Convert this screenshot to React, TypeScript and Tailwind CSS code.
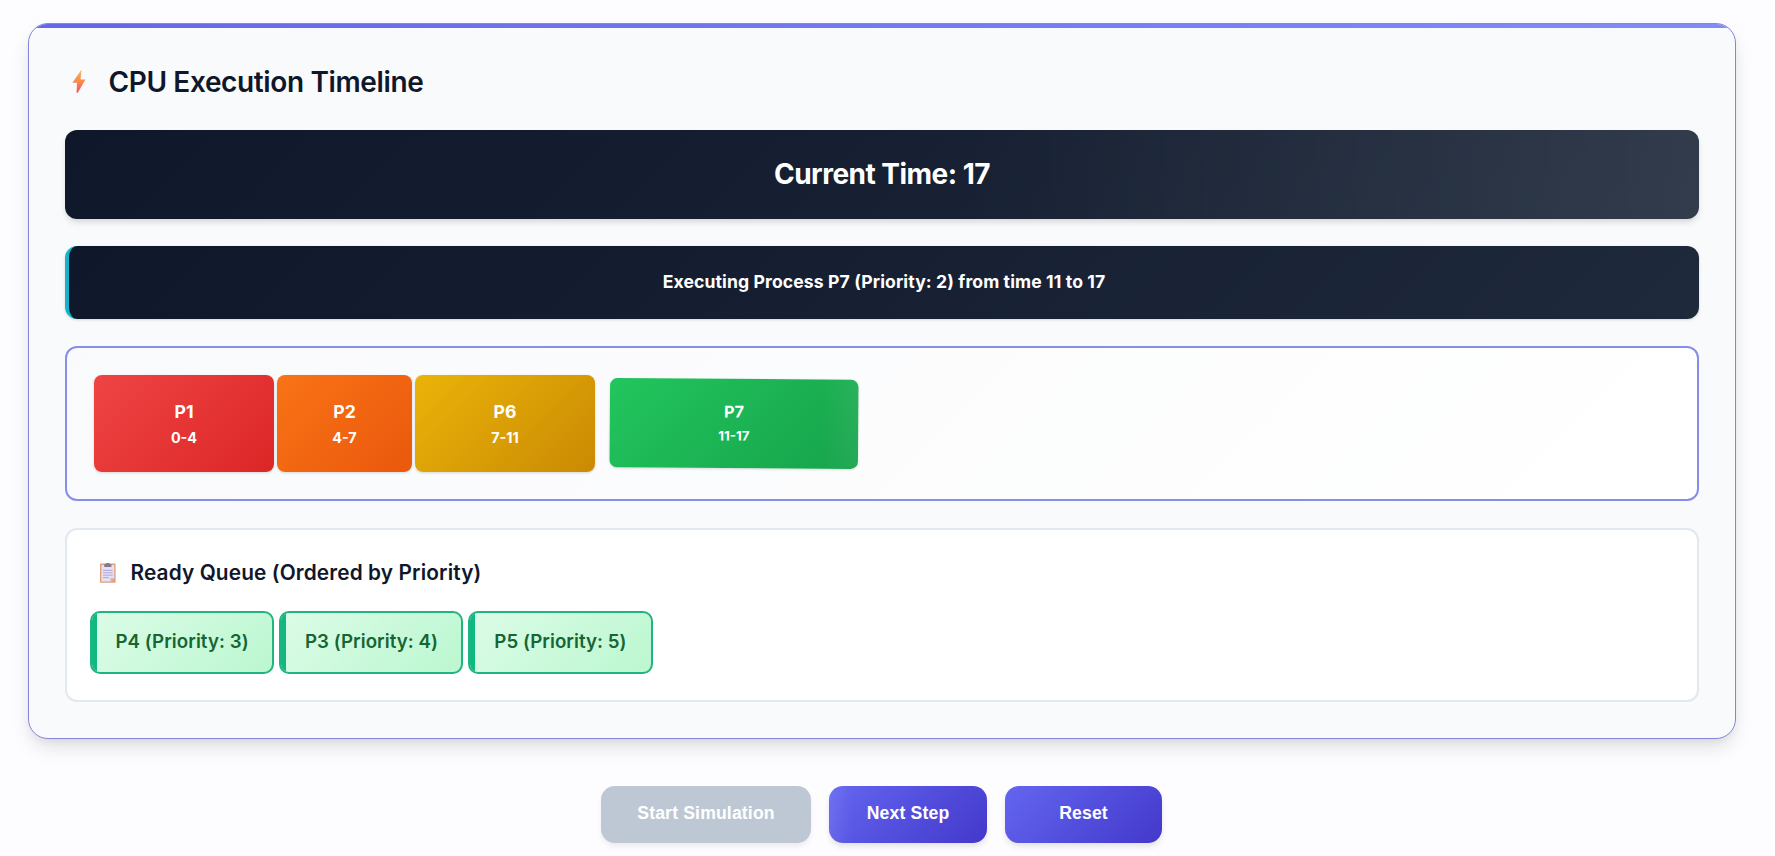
const blocks = [
  { id: "P1", span: "0-4", cls: "w-[180px] pt-[2px] from-[#ef4444] to-[#dc2626]" },
  { id: "P2", span: "4-7", cls: "w-[135px] pt-[2px] from-[#f97316] to-[#ea580c]" },
  { id: "P6", span: "7-11", cls: "w-[180px] pt-[2px] from-[#eab308] to-[#ca8a04]" },
  { id: "P7", span: "11-17", cls: "w-[270px] pb-[1px] translate-x-[1px] from-[#22c55e] to-[#16a34a] scale-[0.92] rotate-[0.4deg]", shine: true },
];

const queue = [
  { id: "P4", priority: 3 },
  { id: "P3", priority: 4 },
  { id: "P5", priority: 5 },
];

function Bolt() {
  return (
    <svg width="14" height="23" viewBox="0 0 14 23" className="mr-2 ml-[7px]">
      <defs>
        <linearGradient id="bolt" x1="0" y1="0" x2="0" y2="1">
          <stop offset="0" stopColor="#f3b65e" />
          <stop offset="0.5" stopColor="#fb8a4c" />
          <stop offset="1" stopColor="#ee4f60" />
        </linearGradient>
      </defs>
      <path d="M9 0.2 L0.4 12.8 H5 L4.6 22.8 H5.8 L13.4 9.4 H8.6 L9.4 0.2 Z" fill="url(#bolt)" />
    </svg>
  );
}

function Clipboard() {
  return (
    <svg width="16" height="20" viewBox="0 0 16 20">
      <rect x="0" y="0.4" width="15.6" height="19.4" rx="0.6" fill="#dfa27c" />
      <path d="M1.4 2H14.2V15L10.4 18.6H1.4Z" fill="#e6e0f3" />
      <path d="M14.2 15L10.4 18.6V15Z" fill="#c9b6dc" />
      <path d="M4.2 4V1.8Q4.2 1 5.4 1Q5.8 0 7.8 0T10.2 1Q11.4 1 11.4 1.8V4Z" fill="#85798f" />
      <path d="M3 7.4H12.6M3 9.8H12.6M3 12.2H12.6M3 14.6H9" stroke="#aba3cd" strokeWidth="0.9" />
    </svg>
  );
}

export default function App() {
  return (
    <div className="h-[856px] overflow-hidden bg-[#fdfcfe] pt-[22.5px] pl-[28px] font-['Inter',sans-serif] text-[#0f172a]">
      <section className="relative h-[716px] w-[1708px] rounded-[20px] border border-[#8585dc] bg-[#f9fafc] px-9 pt-[34px] shadow-[0_10px_20px_-3px_rgba(0,0,0,0.13),0_4px_8px_-2px_rgba(0,0,0,0.05)]">
        <div className="pointer-events-none absolute inset-0 overflow-hidden rounded-[19px]">
          <div className="h-1 bg-linear-to-r from-[#6666e8] to-[#818cf8]" />
        </div>
        <h2 className="flex h-12 items-center text-[28px] font-semibold tracking-[-0.37px]">
          <Bolt />
          <span className="ml-[14.5px]">CPU Execution Timeline</span>
        </h2>

        <div className="relative mt-6 flex h-[89px] items-center justify-center overflow-hidden rounded-xl bg-linear-[135deg] from-[#0f172a] to-[#1e293b] text-[28px] font-bold tracking-[-0.52px] text-white shadow-[0_4px_6px_-1px_rgba(0,0,0,0.15)]">
          <div className="absolute inset-y-0 right-0 w-[740px] bg-linear-to-r from-transparent to-white/9" />
          <span>Current Time: 17</span>
        </div>

        <div className="mt-[27.5px] flex h-[72.5px] items-center justify-center rounded-xl border-l-4 border-[#16b1cb] bg-linear-[135deg] from-[#0f172a] to-[#1e293b] text-[17.6px] font-bold tracking-[0.11px] text-white shadow-[0_1px_3px_rgba(0,0,0,0.15)]">
          Executing Process P7 (Priority: 2) from time 11 to 17
        </div>

        <div className="mt-[27px] flex h-[155px] items-center gap-[3px] rounded-xl border-2 border-[#868fe8] bg-linear-[135deg] from-[#f9fafc] to-white pl-[27px]">
          {blocks.map((b) => (
            <div
              key={b.id}
              className={`relative flex h-[97px] flex-col items-center justify-center overflow-hidden rounded-lg bg-linear-[135deg] font-bold text-white shadow-[0_1px_3px_rgba(0,0,0,0.15)] ${b.cls}`}
            >
              {b.shine && <div className="absolute inset-y-0 right-0 w-10 bg-linear-to-r from-transparent to-white/7" />}
              <span className="text-[17.6px] leading-[28px]">{b.id}</span>
              <span className="text-[14.4px] leading-[24px]">{b.span}</span>
            </div>
          ))}
        </div>

        <div className="mt-[27.5px] h-[173.5px] rounded-xl border-2 border-[#e2e8f0] bg-white pt-[26px] pl-[22.5px]">
          <h3 className="flex h-[34px] items-center pl-[10px] text-[20.8px] font-semibold tracking-[0.13px]">
            <Clipboard />
            <span className="ml-[15px]">Ready Queue (Ordered by Priority)</span>
          </h3>
          <div className="mt-[21px] flex gap-[5px]">
            {queue.map((q) => (
              <div
                key={q.id}
                className="relative flex h-[63px] w-[184.4px] items-center overflow-hidden rounded-[10px] border-2 border-[#22b47e] bg-linear-[135deg] from-[#dcfce7] to-[#bbf7d0] pl-6 text-[18.7px] font-semibold tracking-[0.05px] text-[#166534]"
              >
                <div className="absolute inset-y-0 left-0 w-[5px] bg-[#10b981]" />
                {q.id} (Priority: {q.priority})
              </div>
            ))}
          </div>
        </div>
      </section>

      <div className="mt-[47.5px] flex w-[1707px] justify-center gap-[18px] font-['Liberation_Sans',sans-serif] text-[17.6px] font-bold tracking-[0.16px] text-white">
        <button className="h-[57px] w-[210px] rounded-[14px] bg-[#bec7d4] pb-[2px] shadow-[0_4px_6px_-1px_rgba(0,0,0,0.08)]">Start Simulation</button>
        <button className="relative h-[57px] w-[158px] overflow-hidden rounded-[14px] bg-linear-[135deg] from-[#6366f1] to-[#4338ca] pb-[2px] shadow-[0_4px_6px_-1px_rgba(0,0,0,0.12)]">
          <span className="absolute inset-y-0 left-0 w-6 bg-linear-to-l from-transparent to-white/8" />
          Next Step
        </button>
        <button className="h-[57px] w-[157px] rounded-[14px] bg-linear-[135deg] from-[#6366f1] to-[#4338ca] pb-[2px] shadow-[0_4px_6px_-1px_rgba(0,0,0,0.12)]">Reset</button>
      </div>
    </div>
  );
}
